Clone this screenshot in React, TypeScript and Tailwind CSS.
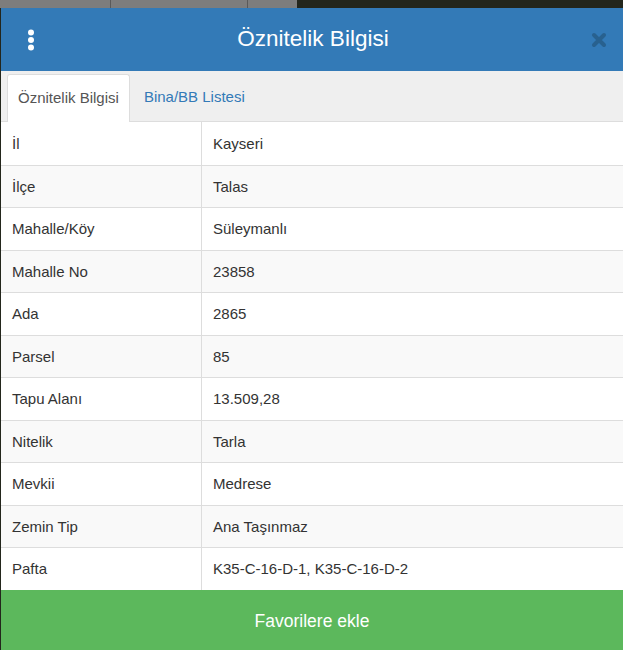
import React from "react";

type Row = { label: string; value: string };

const rows: Row[] = [
  { label: "İl", value: "Kayseri" },
  { label: "İlçe", value: "Talas" },
  { label: "Mahalle/Köy", value: "Süleymanlı" },
  { label: "Mahalle No", value: "23858" },
  { label: "Ada", value: "2865" },
  { label: "Parsel", value: "85" },
  { label: "Tapu Alanı", value: "13.509,28" },
  { label: "Nitelik", value: "Tarla" },
  { label: "Mevkii", value: "Medrese" },
  { label: "Zemin Tip", value: "Ana Taşınmaz" },
  { label: "Pafta", value: "K35-C-16-D-1, K35-C-16-D-2" },
];

function DotsIcon() {
  return (
    <svg viewBox="0 0 8 22" className="h-[22px] w-[8px]" fill="currentColor">
      <circle cx="4" cy="3.5" r="3" />
      <circle cx="4" cy="11" r="3" />
      <circle cx="4" cy="18.5" r="3" />
    </svg>
  );
}

function CloseIcon() {
  return (
    <svg viewBox="0 0 16 16" className="h-[16px] w-[16px]">
      <path
        d="M3 3l10 10M13 3L3 13"
        stroke="currentColor"
        strokeWidth={4}
        strokeLinecap="round"
      />
    </svg>
  );
}

export default function App() {
  return (
    <div
      className="relative h-[650px] w-[623px] overflow-hidden bg-[#23261c]"
      style={{ fontFamily: '"Liberation Sans", Arial, sans-serif' }}
    >
      {/* map toolbar peeking above the panel */}
      <div className="flex h-[8px] w-[297px] bg-[#7d7d7d]">
        <div className="w-[111px] border-r border-[#5a5a5a]" />
        <div className="w-[137px] border-r border-[#5a5a5a]" />
      </div>

      <div className="ml-[1px] flex h-[642px] flex-col bg-white">
        <div className="flex h-[63px] items-center bg-[#337ab7] px-[26px] text-white">
          <DotsIcon />
          <h1 className="flex-1 text-center text-[22.5px] leading-none">
            Öznitelik Bilgisi
          </h1>
          <span className="mr-[-10px] text-[#28618f]">
            <CloseIcon />
          </span>
        </div>

        <div className="flex h-[51px] items-end border-b border-[#dddddd] bg-[#efefef] pl-[6px]">
          <div className="mb-[-1px] flex h-[48px] items-center rounded-t-[3px] border border-b-0 border-[#dddddd] bg-white px-[10px] text-[15px] text-[#555555]">
            Öznitelik Bilgisi
          </div>
          <div className="flex h-[48px] items-center px-[14px] text-[15px] text-[#337ab7]">
            Bina/BB Listesi
          </div>
        </div>

        <div className="flex-1">
          {rows.map((row, i) => (
            <div
              key={row.label}
              className={`flex h-[42.5px] border-t border-[#dddddd] text-[15px] text-[#333333] first:border-t-0 ${
                i % 2 === 1 ? "bg-[#f9f9f9]" : "bg-white"
              }`}
            >
              <div className="flex w-[201px] items-center border-r border-[#dddddd] pl-[11px] pt-[1px]">
                {row.label}
              </div>
              <div className="flex flex-1 items-center pl-[11px] pt-[1px]">{row.value}</div>
            </div>
          ))}
        </div>

        <button
          type="button"
          className="h-[60px] w-full bg-[#5cb85c] pt-[3px] text-[17.5px] text-white"
        >
          Favorilere ekle
        </button>
      </div>
    </div>
  );
}
